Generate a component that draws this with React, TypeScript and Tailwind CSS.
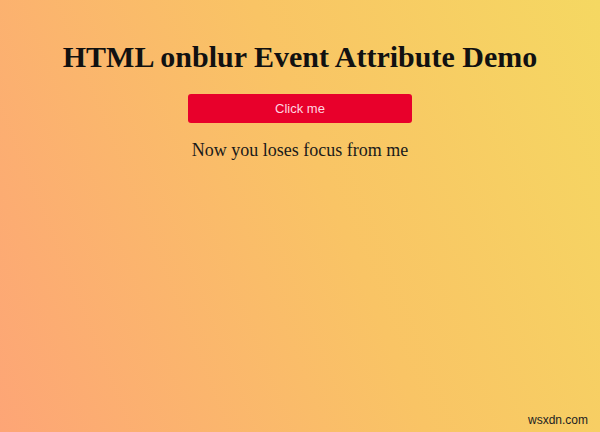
export default function App() {
  return (
    <div className="relative flex h-[432px] w-[600px] flex-col items-center overflow-hidden bg-[linear-gradient(68deg,#fda576_0%,#f9c465_55%,#f5d862_100%)] pt-[38px] font-['Liberation_Serif',serif] text-black">
      <h1 className="text-[30px] font-bold leading-[38px] text-[#111]">HTML onblur Event Attribute Demo</h1>
      <button
        type="button"
        className="mt-[18px] h-[29px] w-[224px] rounded-[3px] bg-[#e8002b] font-['Liberation_Sans',sans-serif] text-[13px] text-[#ffd6e0]"
      >
        Click me
      </button>
      <p className="mt-[15px] text-[18px] leading-[24px] text-[#1a1a1a]">Now you loses focus from me</p>
      <span className="absolute bottom-[3px] right-[12px] font-['Liberation_Sans',sans-serif] text-[12px] text-[#222]">
        wsxdn.com
      </span>
    </div>
  );
}
